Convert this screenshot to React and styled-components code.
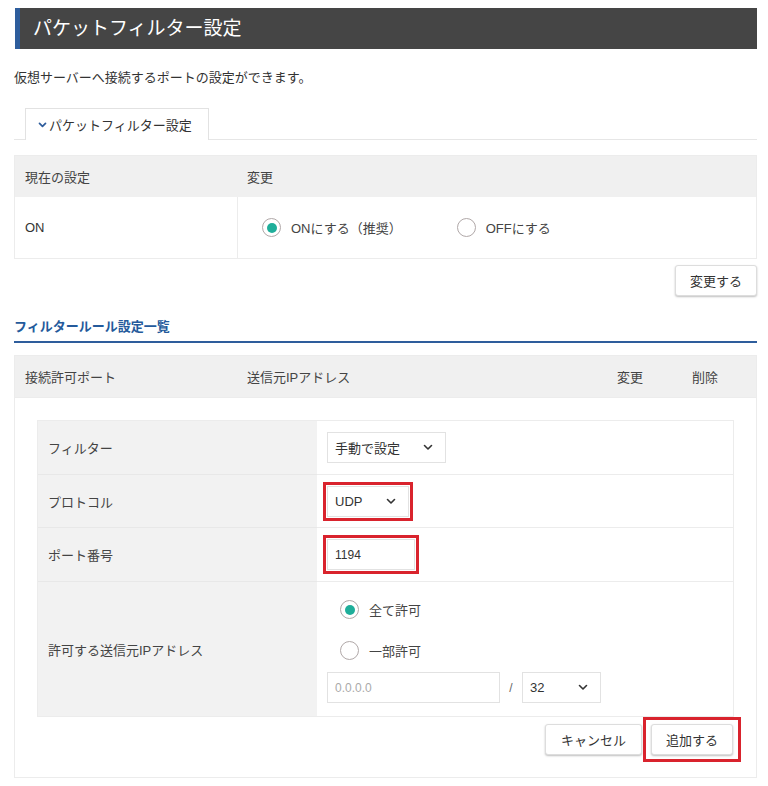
import React from 'react';
import styled, { createGlobalStyle } from 'styled-components';

const GlobalStyle = createGlobalStyle`
  body {
    margin: 0;
    background: #fff;
    font-family: "Liberation Sans", "Noto Sans CJK JP", sans-serif;
    color: #444;
  }
`;

const Page = styled.div`
  width: 743px;
  padding: 8px 0 0 14px;
`;

const TitleBar = styled.h1`
  margin: 0 0 0 1px;
  height: 41px;
  background: #454545;
  border-left: 5px solid #2e5d9c;
  color: #fff;
  font-size: 19px;
  font-weight: normal;
  line-height: 41px;
  padding-left: 13px;
`;

const Lead = styled.p`
  margin: 20px 0 0;
  font-size: 13px;
  line-height: 18px;
  color: #333;
`;

const TabRow = styled.div`
  margin-top: 21px;
  border-bottom: 1px solid #e6e6e6;
  padding-left: 11px;
  display: flex;
`;

const Tab = styled.div`
  width: 184px;
  height: 32px;
  border: 1px solid #e2e2e2;
  border-bottom: none;
  display: flex;
  align-items: center;
  padding-left: 12px;
  box-sizing: border-box;
  font-size: 13px;
  color: #333;
  gap: 2px;
  margin-bottom: -1px;
  background: #fff;
`;

const Table = styled.div`
  margin-top: ${(p) => p.$top || 15}px;
  border: 1px solid #ececec;
`;

const HeadRow = styled.div`
  display: grid;
  grid-template-columns: ${(p) => p.$cols};
  height: 41px;
  align-items: center;
  background: #f0f0f0;
  font-size: 13px;
  color: #444;
`;

const Cell = styled.div`
  padding-left: 10px;
  height: 100%;
  display: flex;
  align-items: center;
  box-sizing: border-box;
  border-left: ${(p) => (p.$divide ? '1px solid #ececec' : 'none')};
`;

const BodyRow = styled.div`
  display: grid;
  grid-template-columns: ${(p) => p.$cols};
  height: 61px;
  font-size: 13px;
  color: #333;
`;

const RadioGroup = styled.div`
  display: flex;
  align-items: center;
  gap: 55px;
  padding-left: 14px;
`;

const RadioLabel = styled.label`
  display: flex;
  align-items: center;
  gap: 10px;
  font-size: 13px;
  color: #444;
`;

const RadioMark = styled.span`
  width: 19px;
  height: 19px;
  border-radius: 50%;
  border: 1px solid #b0a8a8;
  box-sizing: border-box;
  display: flex;
  align-items: center;
  justify-content: center;
  background: #fff;
  &::after {
    content: '';
    width: 10px;
    height: 10px;
    border-radius: 50%;
    background: ${(p) => (p.$on ? '#1fae9a' : 'transparent')};
  }
`;

const Actions = styled.div`
  display: flex;
  justify-content: flex-end;
  align-items: ${(p) => (p.$center ? 'center' : 'flex-start')};
  gap: ${(p) => p.$gap || 0}px;
  margin-top: ${(p) => p.$top ?? 6}px;
  margin-right: ${(p) => p.$right || 0}px;
`;

const Button = styled.button`
  height: 31px;
  padding: 0 ${(p) => p.$pad || 14}px;
  background: #fff;
  border: 1px solid #ddd;
  border-radius: 3px;
  box-shadow: 0 1px 2px rgba(0, 0, 0, 0.25);
  font-family: inherit;
  font-size: 13px;
  color: #333;
`;

const Highlight = styled.div`
  border: 3px solid #d9232d;
  padding: ${(p) => p.$pad || '2px'};
  display: inline-flex;
`;

const SectionTitle = styled.h2`
  margin: 20px 0 0;
  padding-bottom: 6px;
  border-bottom: 2px solid #2e5d9c;
  font-size: 13px;
  font-weight: bold;
  color: #245a9b;
`;

const Panel = styled.div`
  padding: 22px 22px 15px;
  border-top: 1px solid #ececec;
`;

const Form = styled.div`
  display: grid;
  grid-template-columns: 279px 1fr;
  border: 1px solid #ececec;
`;

const FormLabel = styled.div`
  background: #f2f2f2;
  height: ${(p) => p.$h}px;
  display: flex;
  align-items: center;
  padding-left: 10px;
  font-size: 13px;
  color: #444;
  border-top: ${(p) => (p.$first ? 'none' : '1px solid #e8e8e8')};
  box-sizing: border-box;
`;

const FormValue = styled.div`
  height: ${(p) => p.$h}px;
  display: flex;
  flex-direction: ${(p) => (p.$col ? 'column' : 'row')};
  align-items: ${(p) => (p.$col ? 'flex-start' : 'center')};
  justify-content: flex-start;
  padding-left: ${(p) => p.$left || 10}px;
  padding-top: ${(p) => p.$topPad || 0}px;
  border-top: ${(p) => (p.$first ? 'none' : '1px solid #ececec')};
  box-sizing: border-box;
  background: #fff;
`;

const Select = styled.div`
  height: 31px;
  width: ${(p) => p.$w}px;
  border: 1px solid #e2e2e2;
  box-sizing: border-box;
  display: flex;
  align-items: center;
  justify-content: space-between;
  padding: 0 12px 0 7px;
  font-size: 13px;
  color: #333;
  background: #fff;
`;

const Input = styled.div`
  height: 31px;
  width: ${(p) => p.$w}px;
  border: 1px solid #e2e2e2;
  box-sizing: border-box;
  display: flex;
  align-items: center;
  padding-left: 7px;
  font-size: 12px;
  color: ${(p) => (p.$placeholder ? '#aaa' : '#333')};
  background: #fff;
`;

const RadioStack = styled.div`
  display: flex;
  flex-direction: column;
  gap: 22px;
  padding-left: 13px;
`;

const IpRow = styled.div`
  display: flex;
  align-items: center;
  margin-top: 12px;
  font-size: 12px;
  color: #666;
`;

const Slash = styled.span`
  width: 22px;
  text-align: center;
`;

const Chevron = () => (
  <svg width="10" height="7" viewBox="0 0 10 7" fill="none">
    <path d="M1.5 1.5 L5 5 L8.5 1.5" stroke="#333" strokeWidth="1.6" strokeLinecap="round" strokeLinejoin="round" />
  </svg>
);

const SmallChevron = () => (
  <svg width="9" height="6" viewBox="0 0 10 7" fill="none">
    <path d="M1.5 1.5 L5 5 L8.5 1.5" stroke="#2e5d9c" strokeWidth="2" strokeLinecap="round" strokeLinejoin="round" />
  </svg>
);

export default function App() {
  return (
    <>
      <GlobalStyle />
      <Page>
        <TitleBar>パケットフィルター設定</TitleBar>
        <Lead>仮想サーバーへ接続するポートの設定ができます。</Lead>
        <TabRow>
          <Tab>
            <SmallChevron />
            パケットフィルター設定
          </Tab>
        </TabRow>

        <Table>
          <HeadRow $cols="222px 1fr">
            <Cell>現在の設定</Cell>
            <Cell>変更</Cell>
          </HeadRow>
          <BodyRow $cols="222px 1fr">
            <Cell>ON</Cell>
            <Cell $divide>
              <RadioGroup>
                <RadioLabel>
                  <RadioMark $on />
                  ONにする（推奨）
                </RadioLabel>
                <RadioLabel>
                  <RadioMark />
                  OFFにする
                </RadioLabel>
              </RadioGroup>
            </Cell>
          </BodyRow>
        </Table>
        <Actions>
          <Button $pad={14}>変更する</Button>
        </Actions>

        <SectionTitle>フィルタールール設定一覧</SectionTitle>

        <Table $top={12}>
          <HeadRow $cols="222px 1fr 75px 74px">
            <Cell>接続許可ポート</Cell>
            <Cell>送信元IPアドレス</Cell>
            <Cell>変更</Cell>
            <Cell>削除</Cell>
          </HeadRow>
          <Panel>
            <Form>
              <FormLabel $h={53} $first>フィルター</FormLabel>
              <FormValue $h={53} $first>
                <Select $w={119}>
                  手動で設定
                  <Chevron />
                </Select>
              </FormValue>

              <FormLabel $h={53}>プロトコル</FormLabel>
              <FormValue $h={53} $left={6}>
                <Highlight $pad="1px">
                  <Select $w={82}>
                    UDP
                    <Chevron />
                  </Select>
                </Highlight>
              </FormValue>

              <FormLabel $h={54}>ポート番号</FormLabel>
              <FormValue $h={54} $left={6}>
                <Highlight $pad="1px">
                  <Input $w={88}>1194</Input>
                </Highlight>
              </FormValue>

              <FormLabel $h={135}>許可する送信元IPアドレス</FormLabel>
              <FormValue $h={135} $col $topPad={18}>
                <RadioStack>
                  <RadioLabel>
                    <RadioMark $on />
                    全て許可
                  </RadioLabel>
                  <RadioLabel>
                    <RadioMark />
                    一部許可
                  </RadioLabel>
                </RadioStack>
                <IpRow>
                  <Input $w={173} $placeholder>0.0.0.0</Input>
                  <Slash>/</Slash>
                  <Select $w={79}>
                    32
                    <Chevron />
                  </Select>
                </IpRow>
              </FormValue>
            </Form>
            <Actions $top={0} $gap={1} $center $right={-7}>
              <Button $pad={15}>キャンセル</Button>
              <Highlight $pad="4px 5px">
                <Button $pad={14}>追加する</Button>
              </Highlight>
            </Actions>
          </Panel>
        </Table>
      </Page>
    </>
  );
}
